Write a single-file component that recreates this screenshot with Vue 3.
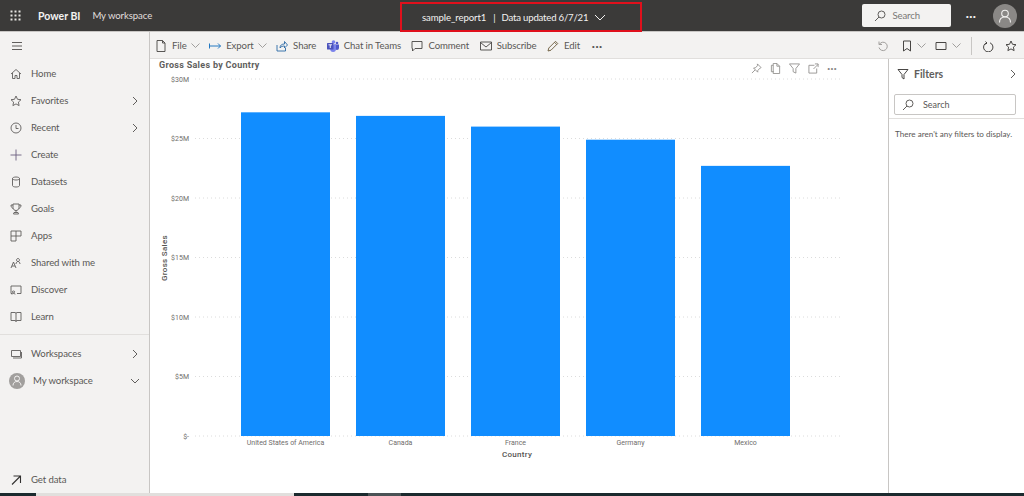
<template>
  <div class="page">
    <header class="topbar">
      <svg class="waffle" width="12" height="12" viewBox="0 0 12 12" fill="#e8e6e4">
        <template v-for="y in [1, 5, 9]" :key="y">
          <rect v-for="x in [1, 5, 9]" :key="x" :x="x - 0.5" :y="y - 0.5" width="2" height="2" />
        </template>
      </svg>
      <span class="brand">Power BI</span>
      <span class="crumb">My workspace</span>
      <div class="report-title">
        <span>sample_report1</span>
        <span class="pipe">|</span>
        <span class="updated">Data updated 6/7/21</span>
        <svg width="12" height="7" viewBox="0 0 12 7" fill="none" stroke="#f3f2f1" stroke-width="1"><path d="M1 1l5 5 5-5" /></svg>
      </div>
      <div class="top-search">
        <svg width="12" height="12" viewBox="0 0 12 12" fill="none" stroke="#605e5c" stroke-width="1"><circle cx="7.5" cy="4.5" r="3.5" /><path d="M5 7l-4 4" /></svg>
        <span>Search</span>
      </div>
      <span class="top-dots">···</span>
      <div class="avatar">
        <svg width="14" height="14" viewBox="0 0 14 14" fill="none" stroke="#f3f2f1" stroke-width="1.1"><circle cx="7" cy="4.5" r="3.3" /><path d="M1.5 13.5c0-3.5 2-5.500 5.500-5.500s5.500 2 5.500 5.500" /></svg>
      </div>
    </header>

    <div class="body">
      <nav class="sidebar">
        <div class="hamburger">
          <svg width="12" height="10" viewBox="0 0 12 10" stroke="#605e5c" stroke-width="1"><path d="M1 1.500h10M1 5h10M1 8.500h10" /></svg>
        </div>
        <div class="nav-group">
          <div v-for="item in navItems" :key="item.label" class="nav-item">
            <svg class="nav-icon" width="12" height="12" viewBox="0 0 12 12" fill="none" :stroke="item.color || '#605e5c'" stroke-width="0.9"><path :d="item.icon" /></svg>
            <span>{{ item.label }}</span>
            <svg v-if="item.arrow" class="nav-arrow" width="6" height="10" viewBox="0 0 6 10" fill="none" stroke="#605e5c"><path d="M1 1l4 4-4 4" /></svg>
          </div>
        </div>
        <div class="nav-divider"></div>
        <div class="nav-item">
          <svg class="nav-icon" width="12" height="12" viewBox="0 0 12 12" fill="none" stroke="#605e5c" stroke-width="0.9"><path d="M3 2.500h7.500v6H1.500v-6zM11.500 4v6H3" /></svg>
          <span>Workspaces</span>
          <svg class="nav-arrow" width="6" height="10" viewBox="0 0 6 10" fill="none" stroke="#605e5c"><path d="M1 1l4 4-4 4" /></svg>
        </div>
        <div class="nav-item">
          <div class="nav-avatar">
            <svg width="10" height="11" viewBox="0 0 10 11" fill="none" stroke="#f3f2f1"><circle cx="5" cy="3.500" r="2.500" /><path d="M1 10.500c0-2.500 1.500-4 4-4s4 1.500 4 4" /></svg>
          </div>
          <span class="my-ws">My workspace</span>
          <svg class="nav-arrow nav-arrow-down" width="10" height="6" viewBox="0 0 10 6" fill="none" stroke="#605e5c"><path d="M1 1l4 4 4-4" /></svg>
        </div>
        <div class="get-data">
          <svg class="nav-icon" width="12" height="12" viewBox="0 0 12 12" fill="none" stroke="#323130" stroke-width="1.1"><path d="M2 10.500l8-8M3.500 2h7v7" /></svg>
          <span>Get data</span>
        </div>
      </nav>

      <div class="content">
        <div class="toolbar">
          <div v-for="tool in tools" :key="tool.label" class="tool">
            <svg v-if="tool.label === 'Chat in Teams'" width="12" height="12" viewBox="0 0 12 12">
              <circle cx="6.500" cy="2" r="1.800" fill="#7b83eb" />
              <circle cx="10" cy="3" r="1.300" fill="#5059c9" />
              <path d="M7 4.500h5v3.500a2 2 0 0 1-4 0z" fill="#5059c9" />
              <path d="M3 4.500h6v4.500a2.800 2.800 0 0 1-5.800 0z" fill="#7b83eb" />
              <rect x="0" y="3" width="6.500" height="6.500" rx="0.500" fill="#4b53bc" />
              <path d="M1.500 4.800h3.500M3.250 4.800v3.200" stroke="#fff" stroke-width="0.900" fill="none" />
            </svg>
            <svg v-else width="12" height="12" viewBox="0 0 12 12" fill="none" :stroke="tool.color || '#484644'" stroke-width="0.9"><path :d="tool.icon" /></svg>
            <span>{{ tool.label }}</span>
            <svg v-if="tool.menu" class="tool-chev" width="9" height="5" viewBox="0 0 9 5" fill="none" stroke="#a19f9d"><path d="M0.500 0.500l4 4 4-4" /></svg>
          </div>
          <span class="tool-dots">···</span>
          <div class="toolbar-right">
            <svg width="12" height="12" viewBox="0 0 12 12" fill="none" stroke="#a19f9d"><path d="M2 1.500v3h3M2.300 4.500A4.200 4.200 0 1 1 2 7.500" /></svg>
            <svg class="tr-book" width="10" height="12" viewBox="0 0 10 12" fill="none" stroke="#484644"><path d="M1.500 1h7v10L5 8.500 1.500 11z" /></svg>
            <svg width="9" height="5" viewBox="0 0 9 5" fill="none" stroke="#a19f9d"><path d="M0.500 0.500l4 4 4-4" /></svg>
            <svg class="tr-view" width="12" height="10" viewBox="0 0 12 10" fill="none" stroke="#484644"><path d="M1 1.500h10v7H1z" /></svg>
            <svg width="9" height="5" viewBox="0 0 9 5" fill="none" stroke="#a19f9d"><path d="M0.500 0.500l4 4 4-4" /></svg>
            <div class="tr-sep"></div>
            <svg width="12" height="12" viewBox="0 0 12 12" fill="none" stroke="#484644"><path d="M3.500 1.500l1.500 1.500-1.500 1.500M4.500 2.800a4.700 4.700 0 1 0 3.500 0" /></svg>
            <svg class="tr-star" width="12" height="12" viewBox="0 0 12 12" fill="none" stroke="#484644"><path d="M6 1l1.500 3.300 3.500.4-2.600 2.400.7 3.500L6 8.900l-3.100 1.700.7-3.500L1 4.700l3.500-.4z" /></svg>
          </div>
        </div>

        <div class="workspace">
          <section class="chart-pane">
            <svg class="chart" width="738" height="434" viewBox="150 59 738 434">
              <g v-for="tick in ticks" :key="tick.label">
                <line x1="195" x2="840" :y1="tick.y" :y2="tick.y" stroke="#dcdcdc" stroke-width="1" stroke-dasharray="1 3" />
                <text class="tick" x="189" :y="tick.y + 2.500" text-anchor="end">{{ tick.label }}</text>
              </g>
              <g v-for="bar in bars" :key="bar.name">
                <rect :x="bar.x" :y="bar.y" width="89" :height="bar.height" fill="#118dff" />
                <text class="tick" :x="bar.x + 44.500" y="445" text-anchor="middle">{{ bar.name }}</text>
              </g>
              <text class="axis-title" x="517" y="457" text-anchor="middle">Country</text>
              <text class="axis-title" transform="translate(166.500 258) rotate(-90)" text-anchor="middle">Gross Sales</text>
            </svg>
            <h3 class="chart-title">Gross Sales by Country</h3>
            <div class="visual-header">
              <svg v-for="icon in headerIcons" :key="icon" width="11" height="11" viewBox="0 0 12 12" fill="none" stroke="#8a8886" stroke-width="0.9"><path :d="icon" /></svg>
              <span class="header-dots">···</span>
            </div>
          </section>

          <aside class="filters">
            <div class="filters-head">
              <svg width="12" height="12" viewBox="0 0 12 12" fill="none" stroke="#484644"><path d="M1 1.500h10L7 6.500V11L5 9.500v-3z" /></svg>
              <span>Filters</span>
              <svg class="filters-chev" width="6" height="10" viewBox="0 0 6 10" fill="none" stroke="#605e5c"><path d="M1 1l4 4-4 4" /></svg>
            </div>
            <div class="filters-search">
              <svg width="12" height="12" viewBox="0 0 12 12" fill="none" stroke="#605e5c"><circle cx="7.500" cy="4.500" r="3.500" /><path d="M5 7l-4 4" /></svg>
              <span>Search</span>
            </div>
            <p class="filters-empty">There aren't any filters to display.</p>
          </aside>
        </div>
      </div>
    </div>

    <div class="taskbar">
      <div class="taskbar-light"></div>
      <div class="taskbar-grey"></div>
    </div>
  </div>
</template>

<script setup>
const navItems = [
  { label: 'Home', icon: 'M1 6l5-4.500L11 6M2.500 5v5.500h2.500V7.500h2v3h2.500V5' },
  { label: 'Favorites', icon: 'M6 1l1.500 3.300 3.500.4-2.600 2.400.7 3.500L6 8.900l-3.100 1.700.7-3.500L1 4.700l3.500-.4z', arrow: true },
  { label: 'Recent', icon: 'M6 1a5 5 0 1 0 0 10A5 5 0 1 0 6 1zM6 3v3.500h2.500', arrow: true },
  { label: 'Create', icon: 'M6 .5v11M.5 6h11', color: '#6b5f80' },
  { label: 'Datasets', icon: 'M2.500 2.500c0-2 7-2 7 0v7c0 2-7 2-7 0zM2.500 2.500c0 2 7 2 7 0' },
  { label: 'Goals', icon: 'M3 1h6v3.500c0 4-6 4-6 0zM3 2H1c0 2 .8 3 2.300 3.500M9 2h2c0 2-.8 3-2.300 3.500M6 7.500v2M3.500 11h5l-.5-1.500H4z' },
  { label: 'Apps', icon: 'M1 1h10v5H6v5H1zM1 6h5M6 1v5' },
  { label: 'Shared with me', icon: 'M1 11l2.500-6 2.500 6M2 9h3M8 1.500a1.500 1.500 0 1 0 .01 0M6 7c0-1.500 1-2.500 2-2.500s2 1 2 2.500' },
  { label: 'Discover', icon: 'M1 2h10v7.500H7M1 2v7.500h1M3.500 7a1 1 0 1 0 .01 0M2 10.500c0-1 .7-1.500 1.500-1.500S5 9.500 5 10.500' },
  { label: 'Learn', icon: 'M1 1.500h4c.6 0 1 .4 1 1 0-.6.4-1 1-1h4v8H7c-.6 0-1 .4-1 1 0-.6-.4-1-1-1H1zM6 2.500v8' }
]

const tools = [
  { label: 'File', menu: true, icon: 'M2 .5h5.500L10 3v8.500H2zM7.500 .5V3H10' },
  { label: 'Export', menu: true, color: '#0f6cbd', icon: 'M.5 3.500v5M.5 6h11M9 3.500L11.500 6 9 8.500' },
  { label: 'Share', color: '#2b6aa6', icon: 'M1 5v6h8.500V8M4 8c0-3 2-4 4.500-4V1.500L11.500 5 8.500 8V6C6.500 6 5 6.500 4 8z' },
  { label: 'Chat in Teams' },
  { label: 'Comment', icon: 'M1 1.500h10v7H4l-2.500 2.500V8.500H1z' },
  { label: 'Subscribe', icon: 'M.5 2h11v8H.5zM.5 2.500L6 7l5.500-4.500' },
  { label: 'Edit', color: '#6b5a3a', icon: 'M1 11l.8-3L8.500 1.300l2.200 2.200L4 10.200zM7.500 2.300l2.200 2.200' }
]

const headerIcons = [
  'M7 1l4 4-1 .5-2.500 2.500-.2 2L2.800 5.500l2-.2L7 3zM4.500 7.500L1 11',
  'M1.500 2.500h2M1.500 2.500v7H4M3.500 .5h4l3 3v8h-7zM7.500 .5v3h3',
  'M.5 1h11L7.500 6v5l-3-1.500V6z',
  'M1 2.500h6M1 2.500V11h8.500V6M6 6.500L11 1.500M7.500 1H11v3.500'
]

const yBase = 436
const pxPerMillion = 11.9

const ticks = [30, 25, 20, 15, 10, 5, 0].map((m) => ({
  label: m ? `$${m}M` : '$-',
  y: yBase - m * pxPerMillion
}))

const bars = [
  { name: 'United States of America', value: 27.2 },
  { name: 'Canada', value: 26.9 },
  { name: 'France', value: 26 },
  { name: 'Germany', value: 24.9 },
  { name: 'Mexico', value: 22.7 }
].map((b, i) => ({
  ...b,
  x: 241 + i * 115,
  y: yBase - b.value * pxPerMillion,
  height: b.value * pxPerMillion
}))
</script>

<style>
html, body {
  margin: 0;
  background: #fff;
  overflow: hidden;
}
</style>

<style scoped>
.page {
  width: 1024px;
  height: 496px;
  display: flex;
  flex-direction: column;
  overflow: hidden;
  font-family: "Lato", "Noto Sans", "Liberation Sans", sans-serif;
  font-size: 9.6px;
  letter-spacing: -0.1px;
  color: #5a5856;
}

.topbar {
  height: 32px;
  flex: none;
  display: flex;
  align-items: center;
  position: relative;
  background: #3b3a39;
  color: #f3f2f1;
  border-bottom: 1px solid #c8c6c4;
  box-sizing: border-box;
}

.waffle {
  margin-left: 10px;
}

.brand {
  margin-left: 16px;
  font-weight: 700;
  font-size: 10.500px;
  letter-spacing: 0;
}

.crumb {
  margin-left: 12px;
  color: #e1dfdd;
}

.report-title {
  position: absolute;
  left: 400px;
  top: 2px;
  width: 242px;
  height: 30px;
  box-sizing: border-box;
  border: 2px solid #e0101c;
  display: flex;
  align-items: center;
  padding-left: 20px;
  gap: 6px;
}

.pipe {
  margin-left: 1px;
}

.updated {
  letter-spacing: -0.2px;
}

.top-search {
  margin-left: auto;
  width: 89px;
  height: 23px;
  box-sizing: border-box;
  padding-left: 12px;
  display: flex;
  align-items: center;
  gap: 6px;
  background: #f3f2f1;
  border-radius: 2px;
  color: #797775;
}

.top-dots {
  margin-left: 14px;
  font-size: 14px;
  line-height: 1;
}

.avatar {
  margin: 0 7px 0 17px;
  width: 24px;
  height: 24px;
  border-radius: 50%;
  background: #8a8886;
  display: flex;
  align-items: center;
  justify-content: center;
}

.body {
  flex: 1;
  min-height: 0;
  display: flex;
}

.sidebar {
  width: 149px;
  flex: none;
  display: flex;
  flex-direction: column;
  background: #f3f2f1;
  border-right: 1px solid #c8c6c4;
}

.hamburger {
  height: 28px;
  padding-left: 11px;
  display: flex;
  align-items: center;
}

.nav-group {
  display: flex;
  flex-direction: column;
}

.nav-item {
  height: 27px;
  display: flex;
  align-items: center;
  padding-left: 10px;
  gap: 9px;
  flex: none;
}

.nav-icon {
  flex: none;
}

.nav-arrow {
  margin-left: auto;
  margin-right: 11px;
}

.nav-arrow-down {
  margin-right: 9px;
}

.nav-divider {
  height: 1px;
  margin-top: 4px;
  margin-bottom: 5px;
  background: #e1dfdd;
}

.nav-avatar {
  width: 16px;
  height: 16px;
  margin-left: -1px;
  border-radius: 50%;
  background: #a19f9d;
  display: flex;
  align-items: center;
  justify-content: center;
}

.my-ws {
  margin-left: -1px;
}

.get-data {
  margin-top: auto;
  height: 27px;
  display: flex;
  align-items: center;
  gap: 9px;
  padding-left: 10px;
}

.content {
  flex: 1;
  min-width: 0;
  display: flex;
  flex-direction: column;
}

.toolbar {
  height: 27px;
  flex: none;
  box-sizing: border-box;
  display: flex;
  align-items: center;
  padding: 1px 5px 0;
  background: #f3f2f1;
  border-bottom: 1px solid #e1dfdd;
}

.tool {
  display: flex;
  align-items: center;
  gap: 5px;
  margin-right: 10.500px;
}

.tool-chev {
  margin: 0 -1px;
}

.tool-dots {
  margin-left: 1px;
  font-size: 14px;
  line-height: 1;
}

.toolbar-right {
  margin-left: auto;
  display: flex;
  align-items: center;
  gap: 5px;
  padding-right: 2px;
}

.tr-book {
  margin-left: 8px;
}

.tr-view {
  margin-left: 4px;
}

.tr-sep {
  width: 1px;
  height: 18px;
  margin: 0 5px 0 5px;
  background: #c8c6c4;
}

.tr-star {
  margin-left: 6px;
}

.workspace {
  flex: 1;
  min-height: 0;
  display: flex;
}

.chart-pane {
  flex: 1;
  min-width: 0;
  position: relative;
  background: #fff;
}

.chart {
  position: absolute;
  left: 0;
  top: 0;
  display: block;
}

.tick {
  font-family: "Roboto", "Liberation Sans", sans-serif;
  font-size: 7px;
  letter-spacing: 0;
  fill: #6f6d6b;
}

.axis-title {
  font-family: "Roboto", "Liberation Sans", sans-serif;
  font-size: 8px;
  font-weight: 500;
  letter-spacing: 0.3px;
  fill: #555351;
}

.chart-title {
  position: relative;
  margin: 0;
  padding: 0 0 0 9px;
  font-family: "Roboto", "Liberation Sans", sans-serif;
  font-size: 9px;
  line-height: 12px;
  font-weight: 700;
  letter-spacing: 0.3px;
  color: #605e5c;
}

.visual-header {
  position: absolute;
  top: 3px;
  left: 601px;
  display: flex;
  align-items: center;
  gap: 8px;
}

.header-dots {
  color: #8a8886;
  font-size: 13px;
  line-height: 1;
}

.filters {
  width: 136px;
  flex: none;
  box-sizing: border-box;
  background: #fff;
  border-left: 1px solid #c8c6c4;
}

.filters-head {
  height: 30px;
  display: flex;
  align-items: center;
  gap: 5px;
  padding: 0 8px;
  font-size: 10.500px;
  font-weight: 700;
  letter-spacing: 0;
  color: #605e5c;
}

.filters-chev {
  margin-left: auto;
}

.filters-search {
  margin: 5px 8px 0 5px;
  height: 21px;
  box-sizing: border-box;
  border: 1px solid #c8c6c4;
  border-radius: 2px;
  display: flex;
  align-items: center;
  gap: 9px;
  padding-left: 7px;
  font-size: 9px;
  letter-spacing: 0;
}

.filters-empty {
  margin: 3px 0 0;
  padding: 9px 0 0 6px;
  border-top: 1px solid #e1dfdd;
  font-size: 8.100px;
  letter-spacing: 0;
  line-height: 12px;
  white-space: nowrap;
}

.taskbar {
  height: 3px;
  flex: none;
  display: flex;
  background: #1b2a2e;
}

.taskbar-light {
  margin-left: 36px;
  width: 258px;
  background: #e1dfdd;
}

.taskbar-grey {
  margin-left: 74px;
  width: 33px;
  background: #4a5255;
}
</style>
